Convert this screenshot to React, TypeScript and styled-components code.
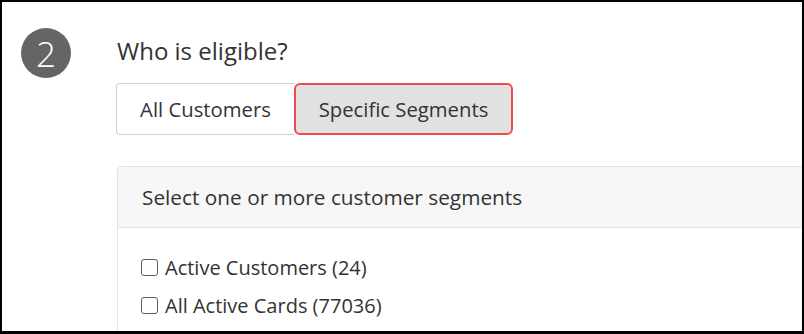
import React from "react";
import styled, { createGlobalStyle } from "styled-components";

const GlobalStyle = createGlobalStyle`
  html, body {
    margin: 0;
    padding: 0;
    background: #ffffff;
  }
  body {
    font-family: "Open Sans", "Liberation Sans", Arial, sans-serif;
    color: #333333;
  }
  * { box-sizing: border-box; }
`;

const Frame = styled.div`
  width: 804px;
  height: 334px;
  border: 2px solid #000000;
  border-bottom-width: 3px;
  background: #ffffff;
  overflow: hidden;
`;

const Step = styled.section`
  display: flex;
  align-items: flex-start;
  padding: 26px 0 0 19px;
`;

const StepNumber = styled.div`
  flex: none;
  width: 50px;
  height: 50px;
  border-radius: 50%;
  background: #656565;
  color: #ffffff;
  display: flex;
  align-items: center;
  justify-content: center;
  font-size: 35px;
  font-weight: 300;
  line-height: 1;
  margin-right: 46px;
`;

const StepBody = styled.div`
  flex: none;
  display: flex;
  flex-direction: column;
  align-items: flex-start;
`;

const Title = styled.h2`
  margin: 7px 0 0;
  font-size: 24px;
  font-weight: 400;
  line-height: 32px;
  color: #333333;
`;

const ButtonGroup = styled.div`
  display: flex;
  margin-top: 16px;
  margin-left: -1px;
`;

const ToggleButton = styled.button<{ $active?: boolean; $width: number }>`
  width: ${(p) => p.$width}px;
  height: 52px;
  font-family: "Open Sans", "Liberation Sans", Arial, sans-serif;
  font-size: 20.3px;
  font-weight: 400;
  color: #333333;
  padding: 0;
  cursor: pointer;
  background: ${(p) => (p.$active ? "#e1e1e1" : "#ffffff")};
  border: ${(p) => (p.$active ? "2px solid #f04a4f" : "1px solid #cfcfcf")};
  border-radius: ${(p) => (p.$active ? "6px" : "4px 0 0 4px")};
  ${(p) => (p.$active ? "" : "border-right: none;")}
`;

const Panel = styled.div`
  margin-top: 31px;
  width: 760px;
  border: 1px solid #e2e2e2;
  border-radius: 4px;
  background: #ffffff;
`;

const PanelHeader = styled.div`
  height: 61px;
  padding-left: 24px;
  background: #f7f7f7;
  border-bottom: 1px solid #e2e2e2;
  border-radius: 4px 4px 0 0;
  font-size: 20.8px;
  line-height: 60px;
  color: #333333;
`;

const PanelBody = styled.div`
  display: flex;
  flex-direction: column;
  gap: 10px;
  padding: 26px 0 20px 23px;
`;

const OptionRow = styled.label`
  display: flex;
  align-items: center;
  height: 28px;
  font-size: 20px;
  line-height: 28px;
  color: #333333;
  cursor: pointer;
`;

const Check = styled.input`
  appearance: none;
  -webkit-appearance: none;
  flex: none;
  width: 17px;
  height: 17px;
  margin: -2px 7px 0 0;
  border: 1px solid #5e5e5e;
  border-radius: 3px;
  background: #ffffff;
`;

const segments = [
  { name: "Active Customers", count: 24 },
  { name: "All Active Cards", count: 77036 },
];

export default function App() {
  return (
    <>
      <GlobalStyle />
      <Frame>
        <Step>
          <StepNumber>2</StepNumber>
          <StepBody>
            <Title>Who is eligible?</Title>
            <ButtonGroup>
              <ToggleButton $width={178}>All Customers</ToggleButton>
              <ToggleButton $active $width={219}>
                Specific Segments
              </ToggleButton>
            </ButtonGroup>
            <Panel>
              <PanelHeader>Select one or more customer segments</PanelHeader>
              <PanelBody>
                {segments.map((s) => (
                  <OptionRow key={s.name}>
                    <Check type="checkbox" />
                    {s.name} ({s.count})
                  </OptionRow>
                ))}
              </PanelBody>
            </Panel>
          </StepBody>
        </Step>
      </Frame>
    </>
  );
}
